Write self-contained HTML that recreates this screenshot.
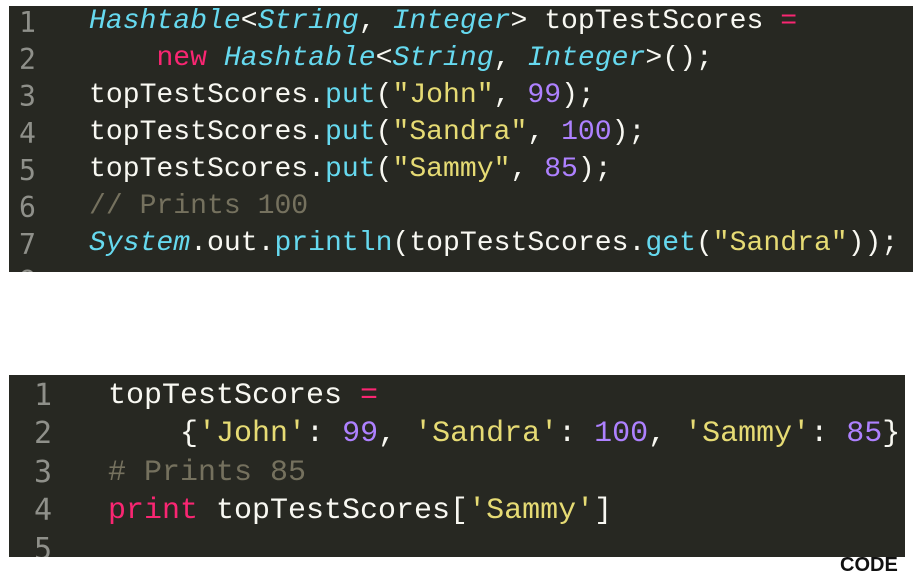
<!DOCTYPE html>
<html><head><style>
body{margin:0;width:913px;height:563px;background:#fff;position:relative;overflow:hidden;font-family:"Liberation Mono",monospace}
.box{position:absolute;background:#272822;overflow:hidden}
.l{position:absolute;white-space:pre;color:#f8f8f2}
.n{position:absolute;color:#8f908a;font-family:"DejaVu Sans Mono",monospace}
.k{color:#f92672}.t{color:#66d9ef;font-style:italic}.f{color:#66d9ef}.s{color:#e6db74}.d{color:#ae81ff}.c{color:#75715e}
</style></head><body>
<div class="box" style="left:9px;top:6px;width:904px;height:266px;font-size:28.1px">
<div class="n" style="left:10px;top:0px">1</div>
<div class="l" style="left:80px;top:0"><span class="t">Hashtable</span>&lt;<span class="t">String</span>, <span class="t">Integer</span>&gt; topTestScores <span class="k">=</span></div>
<div class="n" style="left:10px;top:37px">2</div>
<div class="l" style="left:80px;top:37px">    <span class="k">new</span> <span class="t">Hashtable</span>&lt;<span class="t">String</span>, <span class="t">Integer</span>&gt;();</div>
<div class="n" style="left:10px;top:74px">3</div>
<div class="l" style="left:80px;top:74px">topTestScores.<span class="f">put</span>(<span class="s">"John"</span>, <span class="d">99</span>);</div>
<div class="n" style="left:10px;top:111px">4</div>
<div class="l" style="left:80px;top:111px">topTestScores.<span class="f">put</span>(<span class="s">"Sandra"</span>, <span class="d">100</span>);</div>
<div class="n" style="left:10px;top:148px">5</div>
<div class="l" style="left:80px;top:148px">topTestScores.<span class="f">put</span>(<span class="s">"Sammy"</span>, <span class="d">85</span>);</div>
<div class="n" style="left:10px;top:185px">6</div>
<div class="l c" style="left:80px;top:185px">// Prints 100</div>
<div class="n" style="left:10px;top:222px">7</div>
<div class="l" style="left:80px;top:222px"><span class="t">System</span>.out.<span class="f">println</span>(topTestScores.<span class="f">get</span>(<span class="s">"Sandra"</span>));</div>
<div class="n" style="left:10px;top:259px">8</div>
</div>
<div class="box" style="left:9px;top:375px;width:896px;height:182px;font-size:30px">
<div class="n" style="left:25px;top:3px">1</div>
<div class="l" style="left:99px;top:4px">topTestScores <span class="k">=</span></div>
<div class="n" style="left:25px;top:41px">2</div>
<div class="l" style="left:99px;top:42px">    {<span class="s">'John'</span>: <span class="d">99</span>, <span class="s">'Sandra'</span>: <span class="d">100</span>, <span class="s">'Sammy'</span>: <span class="d">85</span>}</div>
<div class="n" style="left:25px;top:80px">3</div>
<div class="l c" style="left:99px;top:81px"># Prints 85</div>
<div class="n" style="left:25px;top:118px">4</div>
<div class="l" style="left:99px;top:119px"><span class="k">print</span> topTestScores[<span class="s">'Sammy'</span>]</div>
<div class="n" style="left:25px;top:157px">5</div>
</div>
<div style="position:absolute;left:840px;top:554px;font:bold 20px 'Liberation Sans',sans-serif;color:#111">CODE</div>
</body></html>
